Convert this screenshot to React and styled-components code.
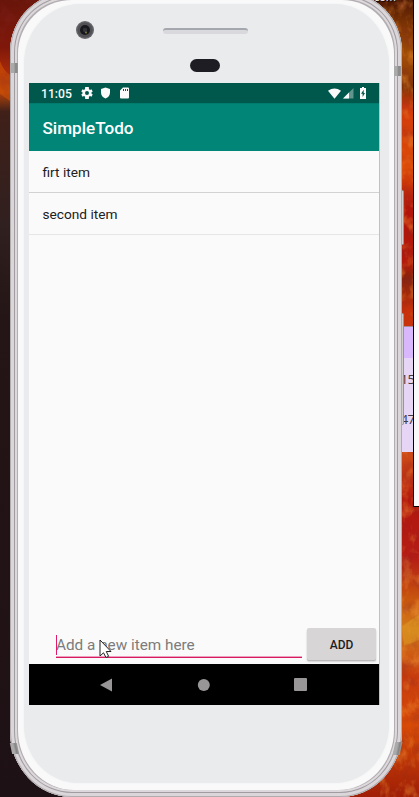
import React from "react";
import styled, { createGlobalStyle } from "styled-components";

const Global = createGlobalStyle`
  * { box-sizing: border-box; }
  html, body { margin: 0; background: #201315; overflow: hidden; }
  body { font-family: Roboto, sans-serif; }
`;

const Desktop = styled.main`
  position: relative;
  width: 419px;
  height: 797px;
  overflow: hidden;
`;

const Wallpaper = styled.svg`
  position: absolute;
  inset: 0;
  display: block;
`;

const DesktopLabel = styled.span`
  position: absolute;
  top: -9px;
  left: 371px;
  font: 11px/12px "Open Sans", sans-serif;
  color: #fff;
  text-shadow: 1px 1px 1px #000;
`;

const SideWindow = styled.aside`
  position: absolute;
  top: 0;
  left: 413px;
  width: 6px;
  height: 507px;
  background: #fafafa;
  border-left: 1px solid #000;
  border-bottom: 1px solid #000;
`;

const CalendarPanel = styled.aside`
  position: absolute;
  top: 326px;
  left: 391px;
  width: 22px;
  height: 126px;
  overflow: hidden;
  background: #e7d5f6;
  border-top: 1px solid #a98a98;
  display: flex;
  flex-direction: column;
`;

const CalendarHead = styled.div`
  height: 31px;
  flex: none;
  background: #d8b7fc;
`;

const CalendarCell = styled.div`
  height: 40px;
  line-height: 43px;
  padding-left: 9.5px;
  white-space: nowrap;
  font-size: 13.5px;
  letter-spacing: -0.6px;
  font-family: "Open Sans", sans-serif;
  color: #3f3a44;
`;

const SideKey = styled.i`
  position: absolute;
  left: ${(p) => p.$left}px;
  top: ${(p) => p.$top}px;
  width: 4px;
  height: ${(p) => p.$height}px;
  border-radius: 0 2px 2px 0;
  background: #cfcdcd;
  border: 1px solid #99969a;
  border-left: 0;
`;

const Shell = styled.div`
  position: relative;
  width: 392px;
  height: 805px;
  margin: -8px 0 0 10px;
  padding: 8px;
  border-radius: 60px 58px 62px 62px / 60px 60px 66px 66px;
  background: #b3aeb1;
  box-shadow:
    inset 0 0 0 1px #b0acae,
    inset 0 0 0 4px #dad6d9,
    inset 0 0 0 5px #a19c9f,
    inset 0 0 0 7px #dcd8db;
`;

const Antenna = styled.i`
  position: absolute;
  top: ${(p) => p.$top}px;
  left: ${(p) => p.$left}px;
  width: 7px;
  height: ${(p) => p.$height}px;
  background: linear-gradient(90deg, #aaa 0 40%, #858585 70%, #9b9b9b);
  transform: skewX(${(p) => p.$skew || 0}deg);
`;

const Bezel = styled.div`
  height: 790px;
  padding: 4px 5px 7px 6px;
  background: #f9f9fa;
  border-radius: 54px 52px 56px 56px / 54px 54px 60px 60px;
`;

const Face = styled.div`
  height: 779px;
  padding: 0 9px 0 5px;
  background: #e9ebec;
  border-radius: 56px 54px 54px 54px / 60px 60px 58px 58px;
  box-shadow: 0 0 2px #eceeef;
`;

const Forehead = styled.header`
  position: relative;
  height: 79px;
`;

const Camera = styled.svg`
  position: absolute;
  left: 47px;
  top: 17px;
`;

const Speaker = styled.div`
  position: absolute;
  left: 134px;
  top: 24px;
  width: 85px;
  height: 6px;
  border-radius: 3px;
  border-top: 2px solid #a5a7ae;
  background: #d9d8dc;
`;

const Sensor = styled.div`
  position: absolute;
  left: 161px;
  top: 55px;
  width: 30px;
  height: 13px;
  border-radius: 7px;
  background: #1e1d23;
`;

const Screen = styled.section`
  width: 351px;
  height: 622px;
  display: flex;
  flex-direction: column;
  background: #fafafa;
  border-right: 1px solid #c0c1c2;
`;

const StatusBar = styled.div`
  height: 20px;
  flex: none;
  display: flex;
  align-items: center;
  padding: 0 13px 0 12px;
  background: #00574b;
  color: #fafafa;
`;

const Clock = styled.time`
  width: 40px;
  font-size: 12.2px;
  font-weight: 500;
  letter-spacing: 0;
  line-height: 20px;
  padding-top: 1px;
`;

const StatusIcon = styled.svg`
  flex: none;
  display: block;
  margin-left: ${(p) => p.$gap || 0}px;
`;

const Spacer = styled.div`
  flex: 1;
`;

const Toolbar = styled.div`
  height: 48px;
  flex: none;
  display: flex;
  align-items: center;
  padding: 1px 14px 0 13.5px;
  background: #008577;
  box-shadow: inset 0 1px 0 #007c6f;
  color: #fff;
`;

const Title = styled.h1`
  margin: 0;
  font-size: 17.1px;
  font-weight: 500;
`;

const List = styled.ul`
  flex: 1;
  margin: 0;
  padding: 0;
  list-style: none;
`;

const Item = styled.li`
  height: ${(p) => (p.$last ? 42 : 42)}px;
  padding-left: 13.5px;
  line-height: 42px;
  font-size: 13.7px;
  color: #212121;
  border-bottom: 1px solid ${(p) => (p.$last ? "#e5e6e7" : "#d2d2d2")};
`;

const Composer = styled.form`
  height: 36px;
  flex: none;
  display: flex;
  padding: 0 2px 0 27px;
`;

const Field = styled.div`
  position: relative;
  width: 246px;
  height: 30px;
  border-bottom: 1px solid #d81b60;
  box-shadow: inset 0 -1px 0 #eda0bd;
  font-size: 15.3px;
  line-height: 35px;
  color: #7c7c7c;
  white-space: nowrap;
`;

const Caret = styled.i`
  position: absolute;
  left: 0;
  top: 7px;
  width: 1px;
  height: 20px;
  background: #e01b68;
`;

const Pointer = styled.svg`
  position: absolute;
  left: 43px;
  top: 11px;
`;

const AddButton = styled.button`
  width: 69px;
  height: 32px;
  margin-left: 5px;
  padding: 1px 0 0;
  border: 0;
  border-radius: 2px;
  background: #d8d5d6;
  box-shadow: 0 1px 1px #b7b5b6, 0 2px 2px #d5d5d5;
  font: 500 12px Roboto, sans-serif;
  color: #1d1d1d;
`;

const NavBar = styled.nav`
  height: 41px;
  flex: none;
  background: #000;
  display: grid;
  grid-template-columns: 12px 12px 13px;
  column-gap: 85px;
  align-items: center;
  padding-left: 71px;
  svg { display: block; }
`;

const items = ["firt item", "second item"];

function FireBackground() {
  return (
    <Wallpaper width="419" height="797" aria-hidden="true">
      <defs>
        <linearGradient id="left" x1="0" y1="0" x2="0" y2="1">
          <stop offset="0" stopColor="#68150a" />
          <stop offset=".06" stopColor="#80180a" />
          <stop offset=".09" stopColor="#a92a08" />
          <stop offset=".115" stopColor="#b74509" />
          <stop offset=".14" stopColor="#402019" />
          <stop offset=".28" stopColor="#30201f" />
          <stop offset=".4" stopColor="#241516" />
          <stop offset="1" stopColor="#1e1115" />
        </linearGradient>
        <linearGradient id="right" x1="0" y1="0" x2="0" y2="1">
          <stop offset="0" stopColor="#4d1804" />
          <stop offset=".03" stopColor="#7b3304" />
          <stop offset=".07" stopColor="#a34e06" />
          <stop offset=".11" stopColor="#803207" />
          <stop offset=".135" stopColor="#d23a0a" />
          <stop offset=".21" stopColor="#dc4b08" />
          <stop offset=".26" stopColor="#b3140a" />
          <stop offset=".33" stopColor="#b21a0b" />
          <stop offset=".35" stopColor="#85240d" />
          <stop offset=".39" stopColor="#c7310b" />
          <stop offset=".57" stopColor="#cd4b18" />
          <stop offset=".63" stopColor="#b2170d" />
          <stop offset=".7" stopColor="#b41c15" />
          <stop offset=".75" stopColor="#c7540e" />
          <stop offset=".79" stopColor="#d37c1a" />
          <stop offset=".85" stopColor="#c73b0d" />
          <stop offset=".91" stopColor="#d74b07" />
          <stop offset="1" stopColor="#9f1e06" />
        </linearGradient>
        <filter id="embers" x="0" y="0" width="100%" height="100%">
          <feTurbulence type="fractalNoise" baseFrequency=".09 .06" numOctaves="4" seed="8" />
          <feColorMatrix values="0 0 0 0 .9  0 0 0 0 .32  0 0 0 0 .04  3 0 0 0 -1.45" />
        </filter>
        <filter id="smoke" x="0" y="0" width="100%" height="100%">
          <feTurbulence type="fractalNoise" baseFrequency=".08" numOctaves="4" seed="3" />
          <feColorMatrix values="0 0 0 0 .25  0 0 0 0 .02  0 0 0 0 .02  3 0 0 0 -1.4" />
        </filter>
      </defs>
      <rect width="210" height="797" fill="url(#left)" />
      <rect x="210" width="209" height="797" fill="url(#right)" />
      <path d="M0 61Q3 70 10 75V101L0 94Z" fill="#cd5006" opacity=".65" />
      <path d="M402 626L419 615V640L404 646Z" fill="#d99220" opacity=".7" />
      <rect x="380" width="39" height="797" filter="url(#embers)" opacity=".45" />
      <rect width="50" height="100" filter="url(#smoke)" opacity=".25" />
      <rect x="380" width="39" height="797" filter="url(#smoke)" opacity=".25" />
    </Wallpaper>
  );
}

function StatusIcons() {
  return (
    <>
      <StatusIcon width="12" height="12" viewBox="2 2 20 20" fill="currentColor">
        <path fillRule="evenodd" d="M19.4 13a7.5 7.5 0 0 0 0-2l2.1-1.7-2-3.5-2.5 1a7 7 0 0 0-1.7-1L15 2H9l-.4 3.8a7 7 0 0 0-1.6 1l-2.5-1-2 3.5L4.6 11a7.5 7.5 0 0 0 0 2l-2.1 1.7 2 3.5 2.5-1a7 7 0 0 0 1.7 1L9 22h6l.3-3.8a7 7 0 0 0 1.7-1l2.5 1 2-3.5zM12 15.3a3.3 3.3 0 1 1 0-6.6 3.3 3.3 0 0 1 0 6.6z" />
      </StatusIcon>
      <StatusIcon $gap={7} width="11" height="12" viewBox="0 0 11 12" fill="currentColor">
        <path d="M5.5 .5L10 2v3.5c0 2.8-1.7 5-4.5 6-2.8-1-4.5-3.2-4.5-6V2z" />
      </StatusIcon>
      <StatusIcon $gap={9} width="9" height="12" viewBox="0 0 9 12" fill="currentColor">
        <path fillRule="evenodd" d="M3 .5h5q1 0 1 1v9q0 1-1 1H1q-1 0-1-1v-7zM3 2v2h1V2zm2 0v2h1V2zm2 0v2h1V2z" />
      </StatusIcon>
      <Spacer />
      <StatusIcon width="13" height="11" viewBox="0 0 13 11" fill="currentColor">
        <path d="M0 2.8Q6.5-1.7 13 2.8L6.5 10.7z" />
      </StatusIcon>
      <StatusIcon $gap={2} width="11" height="11" viewBox="0 0 11 11" fill="currentColor">
        <path d="M0 10.5L10.5 0v10.5z" opacity=".38" />
        <path d="M0 10.5L6 4.5v6z" />
      </StatusIcon>
      <StatusIcon $gap={6} width="6" height="12" viewBox="0 0 6 12">
        <path d="M2 0h2v1h2v11H0V1h2z" fill="#fafafa" />
        <path d="M3.7 2.8L1 6.8h1.6v3.1L5 5.9H3.7z" fill="#00574b" />
      </StatusIcon>
    </>
  );
}

export default function App() {
  return (
    <>
      <Global />
      <Desktop>
        <FireBackground />
        <DesktopLabel>.com</DesktopLabel>
        <CalendarPanel>
          <CalendarHead />
          <CalendarCell>15</CalendarCell>
          <CalendarCell>47</CalendarCell>
        </CalendarPanel>
        <SideWindow />
        <SideKey $left={400} $top={190} $height={55} />
        <SideKey $left={400} $top={313} $height={112} />
        <Shell>
          <Antenna $top={71} $left={1} $height={10} />
          <Antenna $top={74} $left={384} $height={10} />
          <Antenna $top={751} $left={1} $height={11} $skew={12} />
          <Antenna $top={750} $left={384} $height={13} $skew={-12} />
          <Bezel>
            <Face>
              <Forehead>
                <Camera width="18" height="18" viewBox="0 0 18 18">
                  <circle cx="9" cy="9" r="9" fill="#64656a" />
                  <circle cx="9" cy="9" r="7.5" fill="#505054" />
                  <circle cx="9" cy="9" r="5" fill="#17181d" />
                  <circle cx="9" cy="9" r="2.2" fill="#303338" />
                  <circle cx="10" cy="11.5" r="1.1" fill="#74713b" />
                </Camera>
                <Speaker />
                <Sensor />
              </Forehead>
              <Screen>
                <StatusBar>
                  <Clock>11:05</Clock>
                  <StatusIcons />
                </StatusBar>
                <Toolbar>
                  <Title>SimpleTodo</Title>
                </Toolbar>
                <List>
                  {items.map((item, index) => (
                    <Item key={item} $last={index === items.length - 1}>{item}</Item>
                  ))}
                </List>
                <Composer>
                  <Field>
                    Add a new item here
                    <Caret />
                    <Pointer width="14" height="20" viewBox="0 0 14 20">
                      <path d="M1 1v16l3.5-3.2L7 18.5l2.6-1.2-2.3-4.8H12z" fill="#fff" stroke="#222" />
                    </Pointer>
                  </Field>
                  <AddButton type="button">ADD</AddButton>
                </Composer>
                <NavBar>
                  <svg width="12" height="14"><path d="M0 7L12 .5v13z" fill="#999697" /></svg>
                  <svg width="13" height="12"><circle cx="6.8" cy="6" r="6" fill="#999697" /></svg>
                  <svg width="13" height="13"><rect width="13" height="13" rx="1" fill="#999697" /></svg>
                </NavBar>
              </Screen>
            </Face>
          </Bezel>
        </Shell>
      </Desktop>
    </>
  );
}
